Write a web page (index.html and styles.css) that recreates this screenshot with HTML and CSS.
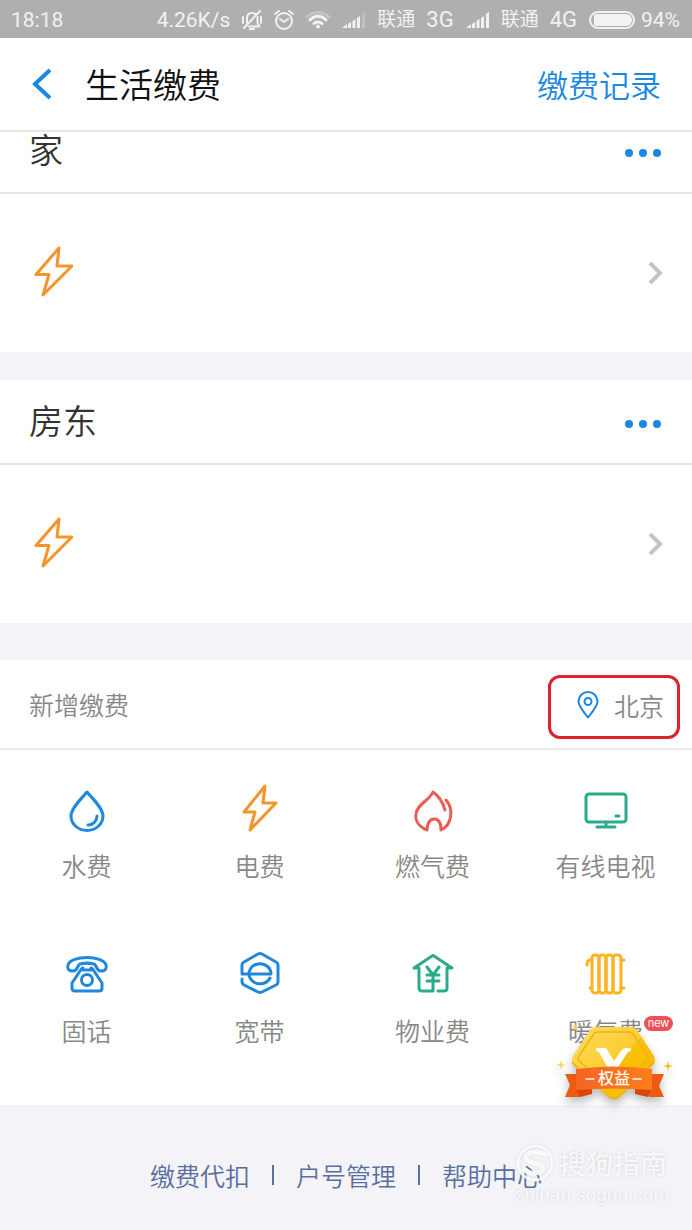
FILE: index.html
```html
<!DOCTYPE html>
<html lang="zh-CN">
<head>
<meta charset="utf-8">
<meta name="viewport" content="width=device-width, initial-scale=1">
<title>生活缴费</title>
<link rel="stylesheet" href="styles.css">
</head>
<body>
<svg class="defs" aria-hidden="true">
  <symbol id="bolt" viewBox="0 0 40 52"><path d="M26 2 3 28.500h13L10 49 39 20H24z"/></symbol>
  <symbol id="bars" viewBox="0 0 24 18"><path d="M0 17h5v-4zM6 17h3v-6l-3 2zM10.500 17h3V8l-3 2zM15 17h3V5l-3 2z"/><path class="last-bar" d="M20 17h3V1l-3 2z"/></symbol>
</svg>

<div class="status">
  <span class="clock">18:18</span>
  <span class="speed">4.26K/s</span>
  <svg class="status-line bell" viewBox="0 0 22 22"><path d="M6 14V9c0-3 2-5 5-5 2 0 3 .5 4 1.500M16.500 8v6l2 3.500H8M9 20h4M3 19 19 2M2 8v6M20 8v6"/></svg>
  <svg class="status-line alarm" viewBox="0 0 20 22"><circle cx="10" cy="12" r="8"/><path d="m6 10 4 3 4-3M1 5l4-3M19 5l-4-3"/></svg>
  <svg class="wifi" viewBox="0 0 24 18"><path class="faint" d="M1 6c6-6 16-6 22 0"/><path d="M4 9c5-5 11-5 16 0M8 12.500c2-2 6-2 8 0"/><circle cx="12" cy="15.500" r="2"/></svg>
  <svg class="bars weak"><use href="#bars"/></svg>
  <span class="carrier">联通</span><span class="net">3G</span>
  <svg class="bars"><use href="#bars"/></svg>
  <span class="carrier">联通</span><span class="net">4G</span>
  <span class="battery"></span>
  <span class="percent">94%</span>
</div>

<header class="header">
  <button class="back" aria-label="返回"><svg viewBox="0 0 22 32"><path d="M20 2 5 16l15 14"/></svg></button>
  <h1 class="title">生活缴费</h1>
  <a class="history" href="#">缴费记录</a>
</header>

<main>
  <section class="group">
    <div class="group-head scrolled"><h2 class="group-name">家</h2><button class="more" aria-label="更多"><i></i><i></i><i></i></button></div>
    <a class="bill" href="#" aria-label="电费"><svg class="bill-bolt"><use href="#bolt"/></svg><svg class="chevron" viewBox="0 0 16 24"><path d="m3 2 10 10L3 22"/></svg></a>
  </section>
  <section class="group second">
    <div class="group-head"><h2 class="group-name">房东</h2><button class="more" aria-label="更多"><i></i><i></i><i></i></button></div>
    <a class="bill" href="#" aria-label="电费"><svg class="bill-bolt"><use href="#bolt"/></svg><svg class="chevron" viewBox="0 0 16 24"><path d="m3 2 10 10L3 22"/></svg></a>
  </section>

  <section class="add">
    <div class="add-head">
      <h2 class="add-title">新增缴费</h2>
      <button class="city"><svg class="pin" viewBox="0 0 24 30"><path d="M12 27.500C7 21 2.500 16 2.500 11.500a9.500 9.500 0 0 1 19 0C21.500 16 17 21 12 27.500z"/><circle cx="12" cy="11.500" r="3.500"/></svg>北京</button>
    </div>
    <div class="services">
      <a class="service" href="#"><svg class="icon blue" viewBox="0 0 48 48"><path d="M24 6c5 6 16 16 16 24a16 14.500 0 0 1-32 0C8 22 19 12 24 6zM34 30c0 5-4 9-9 9"/></svg>水费</a>
      <a class="service" href="#"><svg class="icon orange" viewBox="0 0 48 48"><path d="M29 0 8 26h11l-5 18 26-27H27z"/></svg>电费</a>
      <a class="service" href="#"><svg class="icon red" viewBox="0 0 48 48"><path d="M18 44C10 41 6 35 7 28c1-10 13-13 17-22 6 4 10 11 12 18M37 14c8 9 6 25-5 30 0-6-2-11-7-11s-7 6-7 11"/></svg>燃气费</a>
      <a class="service" href="#"><svg class="icon green" viewBox="0 0 48 48"><rect x="4" y="8" width="40" height="28" rx="3"/><path d="M24 36v5M15 41h18M34 30h3"/></svg>有线电视</a>
      <a class="service" href="#"><svg class="icon blue" viewBox="0 0 48 48"><path d="M10 20c-5 0-6-3-5-6C8 4 40 4 43 14c1 3 0 6-5 6-5 0-4-6-7-7-4-1-10-1-14 0-3 1-2 7-7 7zM17 20c1-2 2-3 3-3v2h8v-2c1 0 2 1 3 3l8 12v5c0 2-1 3-3 3H12c-2 0-3-1-3-3v-5z"/><circle cx="24" cy="29" r="5.500"/></svg>固话</a>
      <a class="service" href="#"><svg class="icon blue" viewBox="0 0 48 48"><path d="M6 23V14q0-2 2-3L22 3q2-1 4 0l14 8q2 1 2 3v17q0 2-2 3l-14 7q-2 1-4 0L8 34q-2-1-2-4v-2M6 23h29a11 10 0 1 0-1 4"/></svg>宽带</a>
      <a class="service" href="#"><svg class="icon green" viewBox="0 0 48 48"><path d="M10 17H5l18-12q1-1 2 0l18 12h-5v20q0 3-3 3h-6M10 17v20q0 3 3 3h11V24M18 16l6 8 6-8M18 24h12M18 30h12"/></svg>物业费</a>
      <a class="service" href="#"><svg class="icon yellow" viewBox="0 0 48 48"><rect x="10" y="4" width="7" height="38" rx="3"/><rect x="17" y="4" width="7" height="38" rx="3"/><rect x="24" y="4" width="7" height="38" rx="3"/><rect x="31" y="4" width="8" height="38" rx="3"/><path d="M10 9H8q-3 0-3 5M39 9h3M8 37h2M39 37h3"/></svg>暖气费</a>
    </div>
    <a class="promo" href="#">
      <svg class="promo-art" viewBox="0 0 116 96" aria-hidden="true">
        <defs>
          <linearGradient id="gold" x2="1" y2="1"><stop stop-color="#ffdc60"/><stop offset=".49" stop-color="#fccc30"/><stop offset=".5" stop-color="#f9c10c"/><stop offset="1" stop-color="#f6b800"/></linearGradient>
          <linearGradient id="ribbon" x2="1"><stop stop-color="#f46524"/><stop offset="1" stop-color="#ff7d1c"/></linearGradient>
        </defs>
        <path fill="#eeb007" d="M39 17h37q3 0 5 3l17 26q2 3-1 6L64 84q-6 5-12 0L17 52q-2-3 0-6l17-26q2-3 5-3z"/>
        <path fill="url(#gold)" d="M39 14h37q3 0 5 3l17 26q2 3-1 6L64 83q-6 5-12 0L17 49q-2-3 0-6l17-26q2-3 5-3z"/>
        <path fill="none" stroke="#f0b410" stroke-width="1.500" d="M41 19h33q2 0 4 3l14 21q1 2-1 5L57 77 23 48q-2-3 0-5l14-21q2-3 4-3z"/>
        <path fill="#fff" d="M40 35h10l8 13 7-10q2-3 5-3h5v3q-3 0-5 4L60 57h-7L44 41q-1-3-4-3z"/>
        <path fill="#ed5b13" d="M9 61h15v23H9l5-12zM93 61h15l-5 12 5 11H93z"/>
        <path fill="#d94608" d="M20 76h16v5l-12 3zM96 76H79v5l13 3z"/>
        <path fill="url(#ribbon)" d="M20 56q38-5 76 0v21q-38-3-76 0z"/>
        <path stroke="#fff" stroke-width="1.500" d="M30 66h8M77 66h8"/>
        <path fill="#f8d65c" d="m5 47 1 4 4 1-4 1-1 4-1-4-4-1 4-1z"/>
        <path fill="#f5bd11" d="m112 48 1 4 4 1-4 1-1 4-1-4-4-1 4-1z"/>
        <path fill="#f8d65c" d="m19 10 1 3 3 1-3 1-1 3-1-3-3-1 3-1z"/>
      </svg>
      <span class="promo-text">权益</span>
      <span class="promo-new">new</span>
    </a>
  </section>
</main>

<footer class="footer">
  <nav class="links"><a href="#">缴费代扣</a><i></i><a href="#">户号管理</a><i></i><a href="#">帮助中心</a></nav>
  <div class="watermark">
    <div class="wm-brand"><svg class="wm-logo" viewBox="0 0 40 40"><circle cx="20" cy="20" r="17"/><path d="M31 12c-8-5-20-3-20 3 0 7 17 3 17 10 0 6-12 7-19 2"/></svg>搜狗指南</div>
    <div class="wm-url">zhinan.sogou.com</div>
  </div>
</footer>
</body>
</html>
```
FILE: styles.css
```css
* { box-sizing: border-box; }
body {
  margin: 0;
  background: #f3f3f8;
  color: #888;
  font-family: "Noto Sans CJK SC", sans-serif;
  font-weight: 350;
}
h1, h2 { margin: 0; font-weight: inherit; }
a { color: inherit; text-decoration: none; }
button { margin: 0; padding: 0; border: 0; background: none; color: inherit; font: inherit; }
svg { display: block; flex: none; fill: none; stroke-linecap: round; stroke-linejoin: round; overflow: visible; }
.defs { position: absolute; width: 0; height: 0; overflow: hidden; }

.status {
  display: flex;
  align-items: center;
  height: 38px;
  padding: 2px 12px 0 11px;
  background: #afafaf;
  color: #f2f2f2;
  font: 400 21px/36px Roboto, "Noto Sans CJK SC", sans-serif;
  white-space: nowrap;
}
.speed { margin-left: auto; }
.status-line { height: 22px; stroke: #f2f2f2; stroke-width: 2; }
.bell { width: 22px; margin-left: 11px; }
.alarm { width: 20px; margin-left: 11px; }
.wifi { width: 24px; height: 18px; margin-left: 12px; stroke: #f2f2f2; stroke-width: 3; }
.wifi circle { fill: #f2f2f2; stroke: none; }
.faint { stroke: #c4c4c4; }
.bars { width: 24px; height: 18px; margin-left: 12px; fill: #f2f2f2; }
.weak { --last-bar: #c0c0c0; }
.last-bar { fill: var(--last-bar, #f2f2f2); }
.carrier { margin-left: 11px; font-size: 19px; }
.net { margin-left: 11px; font-size: 22px; }
.battery {
  width: 46px;
  height: 18px;
  margin: 0 6px 0 12px;
  padding: 1px 1px 1px 3px;
  border: 2px solid #f2f2f2;
  border-radius: 9px;
}
.battery::before { content: ""; display: block; height: 12px; border-radius: 2px 6px 6px 2px; background: #f2f2f2; }

.header {
  display: flex;
  align-items: center;
  height: 94px;
  padding: 0 31px 0 30px;
  border-bottom: 2px solid #e6e6e8;
  background: #fff;
}
.back { width: 55px; }
.back svg { width: 22px; height: 32px; stroke: #1b88e0; stroke-width: 4; stroke-linecap: butt; stroke-linejoin: miter; }
.title { color: #111; font-size: 34px; line-height: 48px; }
.history { margin-left: auto; color: #1b88e0; font-size: 31px; line-height: 48px; }

.group { background: #fff; }
.second { margin-top: 28px; }
.group-head {
  display: flex;
  align-items: center;
  justify-content: space-between;
  height: 85px;
  padding: 0 31px 0 29px;
  border-bottom: 2px solid #e6e6e8;
}
.scrolled { align-items: flex-end; height: 62px; }
.group-name { padding-bottom: 4px; color: #333; font-size: 34px; line-height: 48px; }
.more { display: flex; gap: 6px; height: 48px; align-items: center; padding-top: 4px; }
.more i { width: 8px; height: 8px; border-radius: 50%; background: #1b88e0; }
.scrolled .group-name { padding-bottom: 19px; }
.scrolled .more { height: 60px; padding-bottom: 18px; padding-top: 0; }
.bill {
  display: flex;
  align-items: center;
  justify-content: space-between;
  height: 158px;
  padding: 0 29px 0 33px;
}
.bill-bolt { width: 40px; height: 52px; margin-bottom: 3px; stroke: #f3952b; stroke-width: 3; }
.chevron { width: 16px; height: 24px; stroke: #c4c4c6; stroke-width: 4; stroke-linecap: butt; stroke-linejoin: miter; }

.add { position: relative; margin-top: 37px; background: #fff; }
.add-head {
  display: flex;
  align-items: center;
  justify-content: space-between;
  height: 90px;
  padding: 5px 12px 0 29px;
  border-bottom: 2px solid #ededf0;
}
.add-title { padding-bottom: 6px; font-size: 25px; line-height: 36px; }
.city {
  display: flex;
  align-items: center;
  justify-content: flex-end;
  gap: 14px;
  width: 132px;
  height: 64px;
  padding: 0 13px 3px 0;
  border: 3px solid #db2430;
  border-radius: 12px;
  font-size: 25px;
}
.pin { width: 24px; height: 30px; stroke: #1b88e0; stroke-width: 2; }
.services {
  display: grid;
  grid-template-columns: repeat(4, 1fr);
  row-gap: 71px;
  padding: 36px 0 60px;
}
.service {
  display: flex;
  flex-direction: column;
  align-items: center;
  gap: 16px;
  font-size: 25px;
  line-height: 30px;
}
.icon { width: 48px; height: 48px; stroke-width: 3; }
.blue { stroke: #2088dc; }
.orange { stroke: #f3952b; }
.red { stroke: #ec5c50; }
.green { stroke: #2aac8c; }
.yellow { stroke: #fbb322; }

.promo { position: absolute; right: 20px; bottom: -4px; width: 116px; height: 96px; color: #fff; }
.promo-art { width: 116px; height: 96px; filter: drop-shadow(0 5px 5px #0004); }
.promo-text { position: absolute; top: 54px; left: 0; width: 100%; text-align: center; font-size: 16px; font-weight: 500; line-height: 20px; }
.promo-new {
  position: absolute;
  top: 3px;
  right: -1px;
  width: 29px;
  height: 15px;
  border-radius: 8px;
  background: #f24e58;
  font: 400 11px/14px Inter, sans-serif;
  text-align: center;
}

.footer { position: relative; padding: 52px 0 36px; color: #596f9e; }
.links { display: flex; align-items: center; justify-content: center; gap: 22px; font-size: 25px; line-height: 36px; }
.links i { width: 2px; height: 20px; background: #596f9e; }
.watermark {
  position: absolute;
  top: 36px;
  right: 22px;
  width: 155px;
  color: #fffc;
  font-size: 27px;
  font-weight: 500;
  line-height: 44px;
  text-shadow: 0 0 3px #0002;
  white-space: nowrap;
}
.wm-brand { display: flex; align-items: center; gap: 4px; }
.wm-logo { width: 40px; height: 40px; stroke: #fffc; stroke-width: 3; filter: drop-shadow(0 0 1px #0002); }
.wm-logo path { stroke-width: 5; }
.wm-url { font: 400 19px/20px "Liberation Sans", sans-serif; }
```
